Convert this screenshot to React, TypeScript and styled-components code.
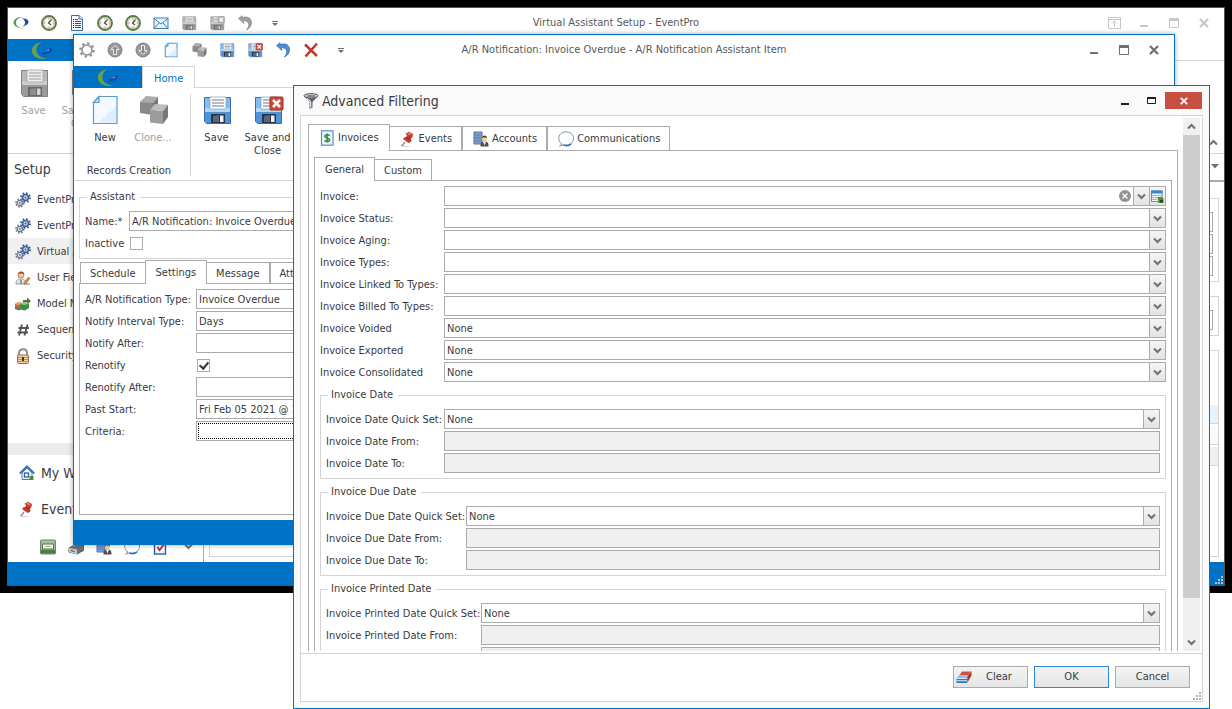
import React, { useId } from "react";
import styled, { createGlobalStyle, css } from "styled-components";

const c = {
  blue: "#0072c6",
  text: "#3a3a40",
  muted: "#9aa39c",
  field: "#ababab",
  soft: "#d4d4d4",
  dim: "#c3cabf",
  glyph: "#6b7275",
};

const GlobalStyle = createGlobalStyle`
  * { box-sizing: border-box; }
  body {
    margin: 0;
    background: #fff;
    color: ${c.text};
    font: 11px/14px "DejaVu Sans Condensed", "DejaVu Sans", Tahoma, sans-serif;
    font-stretch: condensed;
  }
  button, input, select { font: inherit; font-stretch: inherit; color: inherit; margin: 0; }
`;

/* ---------- icons ---------- */

type IconProps = { size?: number };
const Svg = styled.svg.attrs({ "aria-hidden": true })`
  display: block;
  flex: none;
`;

const Swoosh = () => (
  <Svg width={16} height={14} viewBox="0 0 16 14">
    <path d="M8 1C4 1 .5 3.500.5 6.500S4 12 8 12c-3-.5-5-2.500-5-5.200C3 4 5 1.800 8 1z" fill="#5b9a52" />
    <path d="M3 3.500C5 1 9 .5 11.500 2 8.500 1.500 5.500 2 3 3.500z" fill="#2c9ac6" />
    <path d="M9 2.500c4-.5 6.500 1 6.500 3.300 0 2.400-3 4.200-6.500 4.700 2-1 3-2 3-3.800S11 3.200 9 2.500z" fill="#244b9f" />
    <path d="M5.500 12.800c3 .4 5-.4 6.500-2.300-1.500 1-3.500 2-6.500 2.300z" fill="#c7cf9c" />
  </Svg>
);

const TabSwoosh = () => (
  <Svg width={24} height={18} viewBox="0 0 24 18">
    <path d="M12 0C5 1 1 5 2 10c1 5 7 8 15 6.500C11 16 7 13.500 6.500 9 6 5 8 2 12 0z" fill="#6c9f4e" />
    <path d="M12 12.500c1-3 5-4 9.500-6.500 1 1 .8 1.500.3 2.500-1.800 3-5.800 4-9.800 4z" fill="#22479f" />
    <path d="M14 9.500l5-2v1.500z" fill="#5fa2e0" />
  </Svg>
);

const Clock = ({ size = 16 }: IconProps) => (
  <Svg width={size} height={size} viewBox="0 0 16 16">
    <circle cx="8" cy="8" r="7" fill="#fff" stroke="#5a7a48" strokeWidth="1.900" />
    <circle cx="8" cy="8" r="5.400" fill="#fbfbf6" stroke="#b98f6c" strokeWidth=".7" />
    <path d="M10.500 4.500L7.500 8l2.500 2" fill="none" stroke="#444" strokeWidth="1.200" />
    <path d="M8 3.300v1M8 11.700v1M3.300 8h1M11.700 8h1" stroke="#777" />
  </Svg>
);

const ListDoc = () => (
  <Svg width={16} height={16} viewBox="0 0 16 16">
    <path d="M2.500.5H10L13.500 4v11.500h-11z" fill="#fff" stroke="#3d69ad" />
    <path d="M10 .5V4h3.500" fill="#dce6f5" stroke="#3d69ad" />
    <path d="M4 4.500h1m-1 2h1m-1 2h1m-1 2h1m-1 2h1" stroke="#123" />
    <path d="M6 4.500h3M6 6.500h6M6 8.500h6M6 10.500h6M6 12.500h6" stroke="#2b4f97" />
  </Svg>
);

const Mail = () => (
  <Svg width={16} height={16} viewBox="0 0 16 16">
    <rect x="1" y="3" width="14" height="10.500" fill="#e4f2fc" stroke="#3f7fb8" />
    <path d="M1 3.500L8 9l7-5.500M1 13.500l5-5.500M15 13.500L10 8" fill="none" stroke="#3f7fb8" />
  </Svg>
);

const Floppy = ({ size = 16, gray, cross }: IconProps & { gray?: boolean; cross?: boolean }) => {
  const top = gray ? "#b9b9b9" : "#86bdf0";
  const low = gray ? "#9a9a9a" : "#4e92da";
  const edge = gray ? "#808080" : "#3a6ba3";
  return (
    <Svg width={size} height={size} viewBox="0 0 32 32">
      <path d="M3.500 3.500h26v26h-24l-2-2z" fill={top} stroke={edge} />
      <path d="M4 16h25v13H6l-2-2z" fill={low} />
      <path d="M4 14h25v4H4z" fill={gray ? "#cdcdcd" : "#b4d8f7"} />
      <path d="M9 3h16v12H9z" fill={gray ? "#ececec" : "#fdfdfd"} stroke={gray ? "#a2a2a2" : "#8aa8c8"} strokeWidth=".8" />
      <path d="M11 6h12M11 9h12M11 12h12" stroke={gray ? "#9b9b9b" : "#777b82"} strokeWidth="1.200" />
      <path d="M10 20h14v9H10z" fill={gray ? "#686868" : "#2b3442"} />
      <path d="M12 22l6-1v7h-6z" fill={gray ? "#8e8e8e" : "#5a6675"} />
      <path d="M19 21.500h3.500V28H19z" fill={gray ? "#d4d4d4" : "#eef2f6"} />
      {cross && (
        <>
          <rect x="18" y="3" width="13" height="13" rx="1" fill={gray ? "#b2b2b2" : "#cf4a36"} stroke={gray ? "#989898" : "#a92d1e"} />
          <path d="M21 6l7 7m0-7l-7 7" stroke="#fff" strokeWidth="2.500" />
        </>
      )}
    </Svg>
  );
};

const Undo = ({ gray }: { gray?: boolean }) => (
  <Svg width={16} height={16} viewBox="0 0 16 16">
    <path d="M1.500 3.500L5 .8l.5 1.700c5-1.500 9 .5 9 5 0 3.500-2 6-5 7.500 2-2.500 2.800-5 1.800-7C10.300 6 8 5.500 6.200 6L7 8.500z" fill={gray ? "#a0a0a0" : "#4d8fd8"} stroke={gray ? "#868686" : "#2a62a8"} strokeWidth=".7" />
  </Svg>
);

const Gear = () => (
  <Svg width={16} height={16} viewBox="0 0 16 16">
    <circle cx="8" cy="8" r="6.700" fill="none" stroke="#8d8d8d" strokeWidth="2.200" strokeDasharray="2.300 2.960" />
    <circle cx="8" cy="8" r="5" fill="#fff" stroke="#8d8d8d" strokeWidth="1.500" />
  </Svg>
);

const Round = ({ down }: { down?: boolean }) => (
  <Svg width={16} height={16} viewBox="0 0 16 16">
    <circle cx="8" cy="8" r="7" fill="#9a9a9a" stroke="#7d7d7d" />
    <path d={down ? "M8 12.500L4 8.500h2.500v-5h3v5H12z" : "M8 3.500L4 7.500h2.500v5h3v-5H12z"} fill="#8a8a8a" stroke="#ececec" />
  </Svg>
);

const Page = ({ size = 16 }: IconProps) => (
  <Svg width={size} height={size} viewBox="0 0 32 32">
    <path d="M10 2.500h18v27H4.500V8.500z" fill="#f3f9fe" stroke="#5b9bd0" strokeWidth={size > 20 ? 1.2 : 2.2} />
    <path d="M10 2.500v6H4.500z" fill="#c3ddf3" stroke="#5b9bd0" strokeWidth={size > 20 ? 1.2 : 2} />
    <path d="M10 28.500L27 12v16.500z" fill="#dceefb" />
  </Svg>
);

const Cubes = ({ size = 16 }: IconProps) => (
  <Svg width={size} height={size} viewBox="0 0 32 32">
    <path d="M3 8h13v13L3 19z" fill="#8a8a8a" />
    <path d="M3 8l6-6 12 1-5 6z" fill="#ababab" />
    <path d="M16 9l5-6v11l-5 6z" fill="#757575" />
    <path d="M13 16l13 1v13l-13-1.500z" fill="#9c9c9c" />
    <path d="M13 16l5-6 13 .8-5 6.200z" fill="#bdbdbd" />
    <path d="M26 17l5-6.200V23l-5 7z" fill="#787878" />
  </Svg>
);

const RedX = () => (
  <Svg width={16} height={16} viewBox="0 0 16 16">
    <path d="M2 2.500l12 11.500M14 1.500L2.500 14.500" stroke="#c2372a" strokeWidth="2.500" />
  </Svg>
);

const MoreCaret = () => (
  <Svg width={20} height={16} viewBox="0 0 20 16">
    <path d="M7 6.500h6" stroke="#6b7275" />
    <path d="M7 8h6l-3 3z" fill="#6b7275" />
  </Svg>
);

const Gears = () => (
  <Svg width={16} height={16} viewBox="0 0 16 16">
    <circle cx="10.500" cy="5.500" r="4.400" fill="none" stroke="#3c5e9a" strokeWidth="2" strokeDasharray="1.700 1.750" />
    <circle cx="10.500" cy="5.500" r="2.900" fill="#cfdef0" stroke="#3c5e9a" strokeWidth="1.500" />
    <circle cx="10.500" cy="5.500" r="1" fill="#3c5e9a" />
    <circle cx="4.800" cy="11" r="3.900" fill="none" stroke="#66758a" strokeWidth="1.600" strokeDasharray="1.500 1.560" />
    <circle cx="4.800" cy="11" r="2.700" fill="#e8edf3" stroke="#66758a" strokeWidth="1.200" />
    <circle cx="4.800" cy="11" r="1" fill="#66758a" />
  </Svg>
);

const UserEdit = () => (
  <Svg width={16} height={16} viewBox="0 0 16 16">
    <path d="M1 14c0-4 2-5 5-5s5 1 5 5z" fill="#e6e6e6" stroke="#8b8b8b" strokeWidth=".8" />
    <circle cx="6" cy="5" r="3" fill="#f2c9a0" stroke="#a2693c" strokeWidth=".7" />
    <path d="M3 4.500C3 1 9 0 9.300 4.500 7.500 3.500 5 3 3 4.500z" fill="#8e5425" />
    <path d="M6 10v4" stroke="#6d7fa5" strokeWidth="1.500" />
    <path d="M8.500 13.500L13.500 7l1.500 1.500-5 6z" fill="#e0903c" stroke="#a3581a" strokeWidth=".6" />
    <path d="M11 14h4" stroke="#777" />
  </Svg>
);

const Boxes = () => (
  <Svg width={16} height={16} viewBox="0 0 16 16">
    <path d="M8 4h4V1.500l4 3.500-4 3.500V6H8z" fill="#55704a" />
    <path d="M0 8l3-2 4 1v5l-3 1.500L0 12z" fill="#d6602a" />
    <path d="M0 8l3-2 4 1-3 2z" fill="#f1b04c" />
    <path d="M5 8l4-2 5 1.500V12l-4 2.500-5-1z" fill="#3b8e43" />
    <path d="M5 8l4-2 5 1.500L10 9z" fill="#8cc98c" />
    <path d="M0 11.500l5 1.500v1.500l-5-1.500z" fill="#2f65ad" />
  </Svg>
);

const Hash = () => (
  <Svg width={16} height={16} viewBox="0 0 16 16">
    <path d="M7 2.500L4 13.500M12.500 2.500l-3 11M3.500 6H14M2.500 10.500H13" stroke="#4f5358" strokeWidth="1.800" />
  </Svg>
);

const Lock = () => (
  <Svg width={16} height={16} viewBox="0 0 16 16">
    <path d="M4 8V5c0-5 8-5 8 0v3" fill="none" stroke="#8d8d8d" strokeWidth="2" />
    <rect x="2.500" y="7" width="11" height="8.500" rx="1" fill="#f5cfa0" stroke="#8e7453" />
    <path d="M3 9.500h10M3 11.500h10M3 13.500h10" stroke="#d08c45" />
    <path d="M8 9v4" stroke="#4a3217" strokeWidth="2" />
  </Svg>
);

const Home = () => (
  <Svg width={16} height={16} viewBox="0 0 16 16">
    <path d="M3 8v6.500h10V8L8 3z" fill="#f1f6fb" stroke="#4f79ab" />
    <path d="M.8 8.500L8 1.500l7.200 7" fill="none" stroke="#3f75b5" strokeWidth="2" />
    <rect x="5.500" y="8" width="4" height="4" fill="#fff" stroke="#3c5c9c" strokeWidth="1.300" />
    <path d="M10.500 11h4v4h-4z" fill="#4f8f3c" />
  </Svg>
);

const Pin = () => (
  <Svg width={16} height={16} viewBox="0 0 16 16">
    <path d="M5 11L1.500 15.500" stroke="#8b8f94" strokeWidth="1.300" />
    <path d="M1 15.500h8" stroke="#d3d6d8" />
    <path d="M5.500 2.500L9 .8l4 2.200-.5 3-1.500 1.500.5 3-3 1.500-5.500-4 1.500-1.800 2-.2.500-1.500z" fill="#c83a2b" />
    <path d="M6.500 2.500L9 1.500l3 1.700-2.500 1z" fill="#ee7d6a" />
    <path d="M6 6l4.500 2.500" stroke="#8f2218" />
  </Svg>
);

const Accounts = () => (
  <Svg width={16} height={16} viewBox="0 0 16 16">
    <path d="M1 1h8v12H1z" fill="#90b2db" stroke="#4c6c98" />
    <path d="M3 2v10M5 2v10M7 2v10M1 4h8M1 7h8M1 10h8" stroke="#4f75a8" strokeWidth=".7" />
    <path d="M7.500 15.500c0-4 1-5 4-5s4 1 4 5z" fill="#4b4f55" />
    <path d="M10 10.500h3l-1.500 4z" fill="#fff" />
    <circle cx="11.500" cy="7.700" r="2.500" fill="#f3cd9d" />
    <path d="M9 7c0-3.500 5-3.500 5 0-1.500-1-3.500-1-5 0z" fill="#5a3417" />
  </Svg>
);

const Bubble = () => (
  <Svg width={16} height={16} viewBox="0 0 16 16">
    <path d="M4 13C-1.500 10 0 .8 8 .8s10 8.700 4.500 12.200c-2 1.400-5 1.400-6.500.8L1.500 15z" fill="#fcfdfe" stroke="#8b949c" />
    <path d="M5.500 14c2.800 1 5.500.6 7.500-1.200" fill="none" stroke="#2f72c4" strokeWidth="1.800" />
  </Svg>
);

const Invoice = () => (
  <Svg width={16} height={16} viewBox="0 0 16 16">
    <rect x="2.500" y=".8" width="11.500" height="14.400" fill="#e8f3fd" stroke="#5791c8" strokeWidth="1.200" />
    <path d="M10.500 5.800C9.500 4.300 5.800 4.300 5.800 6.200c0 2 4.800 1.500 4.800 3.800 0 1.800-4 2-5 .3M8.200 3.500v9" fill="none" stroke="#3f8a37" strokeWidth="1.600" />
  </Svg>
);

const Funnel = () => (
  <Svg width={16} height={16} viewBox="0 0 16 16">
    <path d="M1 3l5.500 6v7l3-1.500V9L15 3z" fill="#62666d" />
    <path d="M4 5l3.600 4v5.500" fill="none" stroke="#d9dce0" strokeWidth="1.300" />
    <ellipse cx="8" cy="2.800" rx="7" ry="2.200" fill="#d3d6da" stroke="#55585e" />
    <ellipse cx="8" cy="3" rx="4.500" ry="1" fill="#7c8087" />
  </Svg>
);

const Ledger = () => (
  <Svg width={16} height={16} viewBox="0 0 16 16">
    <rect x=".5" y="1" width="15" height="14" rx="1" fill="#a9bfa2" stroke="#6b8a63" />
    <path d="M1 11h14v3.500H1z" fill="#4f7b46" />
    <rect x="2.500" y="5" width="11" height="5" fill="#f3f6ef" stroke="#4f6d48" />
    <path d="M5 7.500h6" stroke="#a5b59f" />
  </Svg>
);

const Register = () => (
  <Svg width={16} height={16} viewBox="0 0 16 16">
    <path d="M1 9l7-4 8 1v5l-7 4-8-2z" fill="#6e7175" stroke="#505357" />
    <path d="M1 9l8 1.500v5L1 13z" fill="#c6c8ca" />
    <path d="M5 1l5-.5v5L5 7z" fill="#a7abb0" />
    <path d="M2.500 11.500l4 1" stroke="#444" />
  </Svg>
);

const Task = () => (
  <Svg width={16} height={16} viewBox="0 0 16 16">
    <rect x="2.500" y="2" width="11" height="13" fill="#f5f9fe" stroke="#2b5cab" strokeWidth="1.400" />
    <path d="M5.500 8l2 3L11.500 6" fill="none" stroke="#c5312a" strokeWidth="2" />
  </Svg>
);

const Eraser = () => (
  <Svg width={16} height={16} viewBox="0 0 16 16">
    <path d="M6 2.500h9.500l-4 5h-9z" fill="#d0533d" />
    <path d="M15.500 2.500v4l-4 7V7.500z" fill="#a63a2a" />
    <path d="M12 7l-1 7V9z" fill="#204f90" />
    <path d="M1 9l2-3h9l-1 3z" fill="#8fc1ee" />
    <path d="M.5 9H11v5H.5z" fill="#3476c4" />
    <path d="M.5 9.500H11M.5 11.700H11" stroke="#d4e8fb" />
  </Svg>
);

const Lookup = () => (
  <Svg width={13} height={13} viewBox="0 0 13 13">
    <rect x=".5" y="1" width="10.500" height="10.500" fill="#f3f8fd" stroke="#5a8fc9" />
    <path d="M0 .5h11.500v3H0z" fill="#3d84d0" />
    <path d="M1 5.500h9M1 7.500h6M1 9.500h5" stroke="#9fb3c9" />
    <path d="M6.500 7h4.500l1.500 1.500V13H7.500z" fill="#4f8e34" />
    <path d="M9 10h3v2.500H9z" fill="#264a1c" />
  </Svg>
);

const ClearMark = () => (
  <Svg width={12} height={12} viewBox="0 0 12 12">
    <circle cx="6" cy="6" r="6" fill="#929292" />
    <path d="M3.500 3.500l5 5m0-5l-5 5" stroke="#fff" strokeWidth="1.300" />
  </Svg>
);

const Chevron = ({ up }: { up?: boolean }) => (
  <Svg width={9} height={7} viewBox="0 0 9 7">
    <path d={up ? "M1 5.500L4.500 2 8 5.500" : "M1 1.500L4.500 5 8 1.500"} fill="none" stroke={c.glyph} strokeWidth="2" />
  </Svg>
);

const MinGlyph = () => (
  <Svg width={12} height={12} viewBox="0 0 12 12">
    <path d="M2 9h8" stroke="currentColor" strokeWidth="2" />
  </Svg>
);
const MaxGlyph = ({ small }: { small?: boolean }) => (
  <Svg width={small ? 9 : 10} height={small ? 7 : 10} viewBox={small ? "0 0 9 7" : "0 0 10 10"}>
    <path d={small ? "M.5 1v5.500h8V1" : "M.5 1v8.500h9V1"} fill="none" stroke="currentColor" />
    <path d={small ? "M0 1h9" : "M0 1.500h10"} stroke="currentColor" strokeWidth={small ? 2 : 3} />
  </Svg>
);
const CloseGlyph = ({ size = 10 }: IconProps) => (
  <Svg width={size} height={size} viewBox="0 0 10 10">
    <path d="M1 1l8 8M9 1L1 9" stroke="currentColor" strokeWidth="2.300" />
  </Svg>
);
const RibbonGlyph = () => (
  <Svg width={13} height={12} viewBox="0 0 13 12">
    <path d="M.5.5h12v11H.5zM.5 2.500h12M6.500 10V4.500M4 6.500L6.500 4 9 6.500" fill="none" stroke="currentColor" />
  </Svg>
);
const Grip = ({ color }: { color: string }) => (
  <Svg width={9} height={9} viewBox="0 0 9 9">
    <path d="M6 0h2v2H6zM3 3h2v2H3zM6 3h2v2H6zM0 6h2v2H0zM3 6h2v2H3zM6 6h2v2H6z" fill={color} />
  </Svg>
);

/* ---------- shared chrome ---------- */

const Desktop = styled.div`
  position: relative;
  min-height: 100vh;
`;

const Backdrop = styled.div`
  display: flex;
  height: calc(100vh - 116px);
  padding: 7px;
  background: #000;
`;

const MainWindow = styled.main`
  flex: 1;
  display: flex;
  flex-direction: column;
  background: #fff;
  border: 1px solid #555;
`;

const ItemWindow = styled.section`
  position: absolute;
  top: 34px;
  left: 73px;
  right: 57px;
  bottom: 164px;
  display: flex;
  flex-direction: column;
  background: #fff;
  border: 1px solid ${c.blue};
  box-shadow: 0 0 5px rgba(0, 0, 0, 0.35);
`;

const FilterWindow = styled.section`
  position: absolute;
  top: 85px;
  left: 293px;
  right: 22px;
  bottom: 0;
  display: flex;
  flex-direction: column;
  padding: 0 6px 6px;
  background: #fafafa;
  border: 1px solid ${c.blue};
`;

const TitleBar = styled.header`
  display: grid;
  grid-template-columns: 1fr auto 1fr;
  align-items: center;
  flex: none;
  height: 31px;
  padding: 0 5px 1px;
`;

const QuickBar = styled.div`
  display: flex;
  align-items: center;
  gap: 12px;
`;

const IconButton = styled.button`
  display: flex;
  align-items: center;
  justify-content: center;
  min-width: 16px;
  height: 16px;
  padding: 0;
  border: 0;
  background: none;
`;

const WindowTitle = styled.h1`
  margin: 0;
  font-size: 11px;
  font-weight: 400;
  color: #55595c;
`;

const WindowControls = styled.div<{ $color: string }>`
  display: flex;
  justify-content: flex-end;
  color: ${(p) => p.$color};
`;

const ControlButton = styled.button<{ $kind?: "small" | "close" }>`
  display: flex;
  align-items: center;
  justify-content: center;
  width: ${(p) => (p.$kind === "close" ? 37 : p.$kind === "small" ? 27 : 30)}px;
  height: 17px;
  padding: 0;
  border: 0;
  color: ${(p) => (p.$kind === "close" ? "#fff" : "inherit")};
  background: ${(p) => (p.$kind === "close" ? "#c75040" : "none")};
`;

const MenuRow = styled.div`
  display: flex;
  flex: none;
  height: 22px;
  border-bottom: 1px solid ${c.soft};
`;

const AppTab = styled.button`
  display: flex;
  align-items: center;
  justify-content: center;
  width: 68px;
  height: 22px;
  padding: 1px 0 0;
  border: 0;
  background: ${c.blue};
`;

const HomeTab = styled.button`
  height: 22px;
  padding: 2px 11px 0;
  border: 1px solid ${c.soft};
  border-bottom: 0;
  background: #fff;
  color: ${c.blue};
`;

const Ribbon = styled.div`
  display: flex;
  flex: none;
  height: 93px;
  padding-top: 6px;
  border-bottom: 1px solid ${c.soft};
`;

const RibbonGroup = styled.div<{ $divided?: boolean }>`
  display: flex;
  flex-direction: column;
  justify-content: space-between;
  height: 82px;
  ${(p) =>
    p.$divided &&
    css`
      padding: 0 13px 0 7px;
      border-right: 1px solid ${c.soft};
    `}
`;

const RibbonButtons = styled.div`
  display: flex;
`;

const RibbonButton = styled.button<{ $dim?: boolean }>`
  display: flex;
  flex-direction: column;
  align-items: center;
  gap: 5px;
  width: 48px;
  padding: 0;
  border: 0;
  background: none;
  line-height: 13px;
  color: ${(p) => (p.$dim ? c.muted : c.text)};
`;

const WideRibbonButton = styled(RibbonButton)`
  width: 51px;
`;

const GroupCaption = styled.div`
  line-height: 10px;
  text-align: center;
`;

const StatusBar = styled.footer<{ $height: number }>`
  display: flex;
  flex: none;
  align-items: flex-end;
  justify-content: flex-end;
  height: ${(p) => p.$height}px;
  background: ${c.blue};
`;

/* ---------- form parts ---------- */

const Group = styled.fieldset`
  margin: 6px 0 0;
  padding: 7px 5px 5px;
  min-width: 0;
  border: 1px solid ${c.soft};
`;

const Legend = styled.legend`
  height: 14px;
  margin-left: 2px;
  padding: 0 5px 0 3px;
`;

const FormGrid = styled.div<{ $label: number }>`
  display: grid;
  grid-template-columns: ${(p) => p.$label}px minmax(0, 1fr);
  grid-auto-rows: 20px;
  row-gap: 2px;
  align-items: center;
`;

const Label = styled.label`
  padding-top: 2px;
  white-space: nowrap;
`;

const TextInput = styled.input`
  width: 100%;
  height: 20px;
  padding: 0 2px;
  border: 1px solid ${c.field};
  border-radius: 0;
  background: #fff;
  &:disabled { background: #f0f0f0; }
`;

const FocusedInput = styled(TextInput)`
  outline: 1px dotted #000;
  outline-offset: -3px;
`;

const Combo = styled.div`
  display: flex;
  align-items: center;
  height: 20px;
  border: 1px solid ${c.field};
  background: #fff;
`;

const ComboSelect = styled.select`
  flex: 1;
  min-width: 0;
  height: 18px;
  padding: 2px 2px 0;
  border: 0;
  appearance: none;
  background: none;
`;

const ComboButton = styled.span`
  display: flex;
  align-items: center;
  justify-content: center;
  width: 16px;
  height: 18px;
  border-left: 1px solid ${c.field};
  background: linear-gradient(#f5f5f5, #e3e3e3);
`;

const CheckBox = styled.input.attrs({ type: "checkbox" })`
  appearance: none;
  display: grid;
  place-items: center;
  width: 13px;
  height: 13px;
  margin: 0 0 0 1px;
  border: 1px solid ${c.field};
  background: #fff;
  &:checked::before {
    content: "";
    width: 4px;
    height: 7px;
    margin-top: -2px;
    border: solid #333;
    border-width: 0 2px 2px 0;
    transform: rotate(40deg);
  }
`;

const TabList = styled.div<{ $indent?: boolean }>`
  display: flex;
  flex: none;
  align-items: flex-end;
  padding-left: ${(p) => (p.$indent ? 1 : 0)}px;
`;

const Tab = styled.button<{ $active?: boolean; $large?: boolean }>`
  position: relative;
  display: flex;
  align-items: center;
  gap: 3px;
  height: ${(p) => (p.$large ? 24 : 21)}px;
  padding: ${(p) => (p.$large ? "0 9px 0 10px" : "2px 9px 0")};
  border: 1px solid ${c.field};
  border-bottom: 0;
  background: #fff;
  white-space: nowrap;
  ${(p) =>
    p.$active &&
    css`
      z-index: 1;
      height: ${p.$large ? 27 : 24}px;
      padding: 0 10px;
      margin: 0 -1px -1px;
      &:first-child { margin-left: 0; }
    `}
`;

const TabPanel = styled.div<{ $nested?: boolean }>`
  flex: 1;
  padding: ${(p) => (p.$nested ? 6 : 5)}px 5px 5px;
  border: 1px solid ${c.field};
`;

function SelectRow({ label, value }: { label: string; value?: string }) {
  const id = useId();
  return (
    <>
      <Label htmlFor={id}>{label}</Label>
      <Combo>
        <ComboSelect id={id} defaultValue={value ?? ""}>
          <option>{value ?? ""}</option>
        </ComboSelect>
        <ComboButton>
          <Chevron />
        </ComboButton>
      </Combo>
    </>
  );
}

function TextRow({ label, value, disabled }: { label: string; value?: string; disabled?: boolean }) {
  const id = useId();
  return (
    <>
      <Label htmlFor={id}>{label}</Label>
      <TextInput id={id} defaultValue={value} disabled={disabled} />
    </>
  );
}

function CheckRow({ label, checked }: { label: string; checked?: boolean }) {
  const id = useId();
  return (
    <>
      <Label htmlFor={id}>{label}</Label>
      <CheckBox id={id} defaultChecked={checked} />
    </>
  );
}

function DateGroup({ name, label }: { name: string; label: number }) {
  return (
    <Group>
      <Legend>{name}</Legend>
      <FormGrid $label={label}>
        <SelectRow label={`${name} Quick Set:`} value="None" />
        <TextRow label={`${name} From:`} disabled />
        <TextRow label={`${name} To:`} disabled />
      </FormGrid>
    </Group>
  );
}

/* ---------- main window ---------- */

const MainBody = styled.div`
  flex: 1;
  display: flex;
  min-height: 0;
`;

const NavPane = styled.nav`
  display: flex;
  flex-direction: column;
  width: 196px;
  border-right: 1px solid ${c.field};
`;

const NavHeading = styled.h2`
  margin: 0;
  padding: 0 6px 2px;
  font-size: 14px;
  line-height: 30px;
  font-weight: 400;
`;

const NavLink = styled.a<{ $current?: boolean }>`
  display: flex;
  align-items: center;
  gap: 6px;
  height: 26px;
  padding: 1px 0 0 7px;
  color: inherit;
  text-decoration: none;
  background: ${(p) => (p.$current ? "#f0f0f0" : "none")};
`;

const NavSplitter = styled.div`
  height: 12px;
  margin-top: auto;
  background: #ebebeb;
`;

const NavSection = styled.a`
  display: flex;
  align-items: center;
  gap: 6px;
  height: 36px;
  padding-left: 11px;
  font-size: 14px;
  line-height: 18px;
  color: inherit;
  text-decoration: none;
`;

const NavShortcuts = styled.div`
  display: flex;
  align-items: center;
  gap: 12px;
  height: 35px;
  padding: 4px 0 0 32px;
`;

const Content = styled.div`
  flex: 1;
  display: flex;
  flex-direction: column;
  padding: 0 5px 5px;
`;

const ContentHeader = styled.div`
  display: flex;
  align-items: center;
  justify-content: flex-end;
  flex: none;
  height: 28px;
  margin: 0 -5px 16px;
  padding: 0 5px 2px;
  border-bottom: 2px solid ${c.field};
`;

const Card = styled.div<{ $fill?: boolean }>`
  display: flex;
  flex-direction: column;
  gap: 2px;
  flex: ${(p) => (p.$fill ? 1 : "none")};
  margin-bottom: ${(p) => (p.$fill ? 0 : 14)}px;
  padding: ${(p) => (p.$fill ? "54px 0 0" : "13px 5px 5px")};
  border: 1px solid ${c.soft};
`;

const GridLine = styled.div<{ $bg: string }>`
  height: 19px;
  background: ${(p) => p.$bg};
  border-bottom: 1px solid ${c.soft};
`;

const RibbonCollapse = styled.button`
  align-self: flex-end;
  display: flex;
  margin: 0 6px 7px auto;
  padding: 0;
  border: 0;
  background: none;
`;

const navItems = [
  { icon: <Gears />, text: "EventPro" },
  { icon: <Gears />, text: "EventPro" },
  { icon: <Gears />, text: "Virtual A", current: true },
  { icon: <UserEdit />, text: "User Fields" },
  { icon: <Boxes />, text: "Model M" },
  { icon: <Hash />, text: "Sequence" },
  { icon: <Lock />, text: "Security" },
];

function Quick({ items }: { items: [string, React.ReactNode][] }) {
  return (
    <QuickBar>
      {items.map(([name, icon], i) => (
        <IconButton key={i} aria-label={name}>
          {icon}
        </IconButton>
      ))}
    </QuickBar>
  );
}

function Main() {
  return (
    <MainWindow>
      <TitleBar>
        <Quick
          items={[
            ["EventPro", <Swoosh />],
            ["Schedule", <Clock />],
            ["List", <ListDoc />],
            ["History", <Clock />],
            ["Recent", <Clock />],
            ["Mail", <Mail />],
            ["Save", <Floppy gray />],
            ["Save and close", <Floppy gray cross />],
            ["Undo", <Undo gray />],
            ["More", <MoreCaret />],
          ]}
        />
        <WindowTitle>Virtual Assistant Setup - EventPro</WindowTitle>
        <WindowControls $color={c.dim}>
          <ControlButton aria-label="Ribbon options"><RibbonGlyph /></ControlButton>
          <ControlButton aria-label="Minimize"><MinGlyph /></ControlButton>
          <ControlButton aria-label="Maximize"><MaxGlyph /></ControlButton>
          <ControlButton aria-label="Close"><CloseGlyph /></ControlButton>
        </WindowControls>
      </TitleBar>
      <MenuRow>
        <AppTab aria-label="Application menu"><TabSwoosh /></AppTab>
      </MenuRow>
      <Ribbon>
        <RibbonGroup>
          <RibbonButtons>
            <WideRibbonButton $dim disabled><Floppy size={32} gray />Save</WideRibbonButton>
            <WideRibbonButton $dim disabled><Floppy size={32} gray cross />Save and Close</WideRibbonButton>
          </RibbonButtons>
        </RibbonGroup>
        <RibbonCollapse aria-label="Collapse ribbon"><Chevron up /></RibbonCollapse>
      </Ribbon>
      <MainBody>
        <NavPane>
          <NavHeading>Setup</NavHeading>
          {navItems.map((n, i) => (
            <NavLink key={i} href="#" $current={n.current}>
              {n.icon}
              {n.text}
            </NavLink>
          ))}
          <NavSplitter />
          <NavSection href="#"><Home />My Work</NavSection>
          <NavSection href="#"><Pin />Events</NavSection>
          <NavShortcuts>
            <IconButton aria-label="Ledger"><Ledger /></IconButton>
            <IconButton aria-label="Register"><Register /></IconButton>
            <IconButton aria-label="Accounts"><Accounts /></IconButton>
            <IconButton aria-label="Communications"><Bubble /></IconButton>
            <IconButton aria-label="Tasks"><Task /></IconButton>
            <IconButton aria-label="More sections"><Chevron /></IconButton>
          </NavShortcuts>
        </NavPane>
        <Content>
          <ContentHeader>
            <Svg width={8} height={5} viewBox="0 0 8 5"><path d="M0 0h8L4 4.500z" fill={c.glyph} /></Svg>
          </ContentHeader>
          <Card>
            <TextInput aria-label="Assistant name" />
            <TextInput aria-label="Description" />
            <TextInput aria-label="Type" />
          </Card>
          <Card>
            <TextInput aria-label="Filter" />
          </Card>
          <Card $fill>
            <GridLine $bg="#e5f4fc" />
            <GridLine $bg="#f7fbfc" />
            <GridLine $bg="#f0f0f0" />
          </Card>
        </Content>
      </MainBody>
      <StatusBar $height={23}><Grip color="#b8c4cc" /></StatusBar>
    </MainWindow>
  );
}

/* ---------- item window ---------- */

const ItemBody = styled.div`
  flex: 1;
  display: flex;
  flex-direction: column;
  padding: 3px 5px 5px;
`;

const SettingsTabs = styled.div`
  flex: 1;
  display: flex;
  flex-direction: column;
  padding-top: 1px;
`;

function Item() {
  return (
    <ItemWindow>
      <TitleBar>
        <Quick
          items={[
            ["Options", <Gear />],
            ["Previous", <Round />],
            ["Next", <Round down />],
            ["New", <Page />],
            ["Clone", <Cubes />],
            ["Save", <Floppy />],
            ["Save and close", <Floppy cross />],
            ["Undo", <Undo />],
            ["Delete", <RedX />],
            ["More", <MoreCaret />],
          ]}
        />
        <WindowTitle>A/R Notification: Invoice Overdue - A/R Notification Assistant Item</WindowTitle>
        <WindowControls $color={c.glyph}>
          <ControlButton aria-label="Minimize"><MinGlyph /></ControlButton>
          <ControlButton aria-label="Maximize"><MaxGlyph /></ControlButton>
          <ControlButton aria-label="Close"><CloseGlyph /></ControlButton>
        </WindowControls>
      </TitleBar>
      <MenuRow>
        <AppTab aria-label="Application menu"><TabSwoosh /></AppTab>
        <HomeTab>Home</HomeTab>
      </MenuRow>
      <Ribbon>
        <RibbonGroup $divided>
          <RibbonButtons>
            <RibbonButton><Page size={32} />New</RibbonButton>
            <RibbonButton $dim><Cubes size={32} />Clone...</RibbonButton>
          </RibbonButtons>
          <GroupCaption>Records Creation</GroupCaption>
        </RibbonGroup>
        <RibbonGroup>
          <RibbonButtons>
            <WideRibbonButton><Floppy size={32} />Save</WideRibbonButton>
            <WideRibbonButton><Floppy size={32} cross />Save and Close</WideRibbonButton>
          </RibbonButtons>
        </RibbonGroup>
      </Ribbon>
      <ItemBody>
        <Group>
          <Legend>Assistant</Legend>
          <FormGrid $label={44}>
            <TextRow label="Name:*" value="A/R Notification: Invoice Overdue" />
            <CheckRow label="Inactive" />
          </FormGrid>
        </Group>
        <SettingsTabs>
          <TabList $indent>
            <Tab>Schedule</Tab>
            <Tab $active>Settings</Tab>
            <Tab>Message</Tab>
            <Tab>Attachments</Tab>
          </TabList>
          <TabPanel>
            <FormGrid $label={111}>
              <TextRow label="A/R Notification Type:" value="Invoice Overdue" />
              <TextRow label="Notify Interval Type:" value="Days" />
              <TextRow label="Notify After:" />
              <CheckRow label="Renotify" checked />
              <TextRow label="Renotify After:" />
              <TextRow label="Past Start:" value="Fri Feb 05 2021 @ 12:00 AM" />
              <Label htmlFor="criteria">Criteria:</Label>
              <FocusedInput id="criteria" />
            </FormGrid>
          </TabPanel>
        </SettingsTabs>
      </ItemBody>
      <StatusBar $height={24} />
    </ItemWindow>
  );
}

/* ---------- filter dialog ---------- */

const DialogBar = styled.header`
  display: flex;
  align-items: center;
  flex: none;
  gap: 3px;
  height: 29px;
  padding-left: 3px;
`;

const DialogTitle = styled.h2`
  flex: 1;
  margin: 0;
  font-size: 14px;
  line-height: 18px;
  font-weight: 400;
`;

const DialogControls = styled(WindowControls)`
  margin-right: 1px;
`;

const DialogBody = styled.div`
  flex: 1;
  display: flex;
  flex-direction: column;
  min-height: 0;
  border: 1px solid ${c.soft};
  background: #fff;
`;

const ScrollArea = styled.div`
  flex: 1;
  display: flex;
  gap: 5px;
  min-height: 0;
  margin: 2px 2px 2px 7px;
  overflow: hidden;
`;

const ScrollContent = styled.div`
  flex: 1;
  min-width: 0;
  padding-top: 6px;
`;

const ScrollTrack = styled.div`
  display: flex;
  flex-direction: column;
  width: 17px;
  background: #f0f0f0;
`;

const ScrollButton = styled.button`
  display: flex;
  align-items: center;
  justify-content: center;
  flex: none;
  height: 17px;
  padding: 0;
  border: 0;
  background: none;
`;

const ScrollThumb = styled.div`
  flex: 13;
  background: #cdcdcd;
`;

const ScrollRest = styled.div`
  flex: 1;
`;

const LookupInput = styled.input`
  flex: 1;
  min-width: 0;
  height: 18px;
  padding: 0 2px;
  border: 0;
  background: none;
`;

const LookupButton = styled(IconButton)`
  width: 16px;
  height: 18px;
  border-left: 1px solid ${c.field};
  background: linear-gradient(#f5f5f5, #e3e3e3);
`;

const DialogFooter = styled.footer`
  position: relative;
  display: flex;
  flex: none;
  justify-content: flex-end;
  align-items: center;
  gap: 6px;
  height: 48px;
  padding: 0 12px 1px;
  border-top: 1px solid ${c.soft};
`;

const PushButton = styled.button<{ $default?: boolean; $icon?: boolean }>`
  display: flex;
  align-items: center;
  justify-content: ${(p) => (p.$icon ? "flex-start" : "center")};
  gap: 14px;
  width: 75px;
  height: 22px;
  padding: 0 2px;
  border: 1px solid ${(p) => (p.$default ? "#2f86d6" : c.field)};
  background: linear-gradient(#f3f3f3, #e4e6e5);
`;

const CornerGrip = styled.span`
  position: absolute;
  right: 0;
  bottom: 0;
`;

const invoiceFilters = [
  ["Invoice Status:"],
  ["Invoice Aging:"],
  ["Invoice Types:"],
  ["Invoice Linked To Types:"],
  ["Invoice Billed To Types:"],
  ["Invoice Voided", "None"],
  ["Invoice Exported", "None"],
  ["Invoice Consolidated", "None"],
];

function Filter() {
  return (
    <FilterWindow role="dialog" aria-label="Advanced Filtering">
      <DialogBar>
        <Funnel />
        <DialogTitle>Advanced Filtering</DialogTitle>
        <DialogControls $color="#1f1f1f">
          <ControlButton $kind="small" aria-label="Minimize"><MinGlyph /></ControlButton>
          <ControlButton $kind="small" aria-label="Maximize"><MaxGlyph small /></ControlButton>
          <ControlButton $kind="close" aria-label="Close"><CloseGlyph size={8} /></ControlButton>
        </DialogControls>
      </DialogBar>
      <DialogBody>
        <ScrollArea>
          <ScrollContent>
            <TabList>
              <Tab $large $active><Invoice />Invoices</Tab>
              <Tab $large><Pin />Events</Tab>
              <Tab $large><Accounts />Accounts</Tab>
              <Tab $large><Bubble />Communications</Tab>
            </TabList>
            <TabPanel $nested>
              <TabList>
                <Tab $active>General</Tab>
                <Tab>Custom</Tab>
              </TabList>
              <TabPanel>
                <FormGrid $label={124}>
                  <Label htmlFor="invoice">Invoice:</Label>
                  <Combo>
                    <LookupInput id="invoice" />
                    <IconButton aria-label="Clear invoice"><ClearMark /></IconButton>
                    <LookupButton aria-label="Open list"><Chevron /></LookupButton>
                    <LookupButton aria-label="Look up invoice"><Lookup /></LookupButton>
                  </Combo>
                  {invoiceFilters.map(([label, value]) => (
                    <SelectRow key={label} label={label} value={value} />
                  ))}
                </FormGrid>
                <DateGroup name="Invoice Date" label={118} />
                <DateGroup name="Invoice Due Date" label={140} />
                <DateGroup name="Invoice Printed Date" label={155} />
              </TabPanel>
            </TabPanel>
          </ScrollContent>
          <ScrollTrack>
            <ScrollButton aria-label="Scroll up"><Chevron up /></ScrollButton>
            <ScrollThumb />
            <ScrollRest />
            <ScrollButton aria-label="Scroll down"><Chevron /></ScrollButton>
          </ScrollTrack>
        </ScrollArea>
        <DialogFooter>
          <PushButton $icon><Eraser />Clear</PushButton>
          <PushButton $default>OK</PushButton>
          <PushButton>Cancel</PushButton>
          <CornerGrip><Grip color="#b5b5b5" /></CornerGrip>
        </DialogFooter>
      </DialogBody>
    </FilterWindow>
  );
}

export default function App() {
  return (
    <Desktop>
      <GlobalStyle />
      <Backdrop>
        <Main />
      </Backdrop>
      <Item />
      <Filter />
    </Desktop>
  );
}
